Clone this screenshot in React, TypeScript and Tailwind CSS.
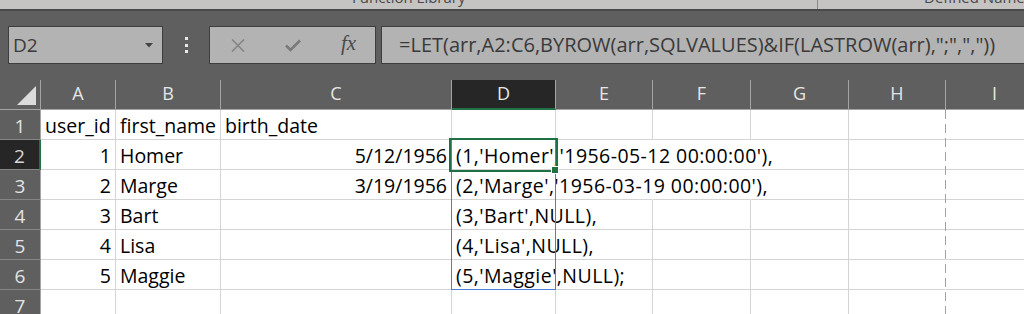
import React from "react";

const colWidths = ["w-[75px]", "w-[105px]", "w-[231px]", "w-[104px]", "w-[97px]", "w-[98px]", "w-[98px]", "w-[97px]", "w-[98px]"];
const letters = ["A", "B", "C", "D", "E", "F", "G", "H", "I"];

type Cell = { t?: string; right?: boolean; spill?: boolean };

const rows: Cell[][] = [
  [{ t: "user_id" }, { t: "first_name" }, { t: "birth_date" }, {}, {}, {}, {}, {}, {}],
  [{ t: "1", right: true }, { t: "Homer" }, { t: "5/12/1956", right: true }, { t: "(1,'Homer','1956-05-12 00:00:00'),", spill: true }, {}, {}, {}, {}, {}],
  [{ t: "2", right: true }, { t: "Marge" }, { t: "3/19/1956", right: true }, { t: "(2,'Marge','1956-03-19 00:00:00'),", spill: true }, {}, {}, {}, {}, {}],
  [{ t: "3", right: true }, { t: "Bart" }, {}, { t: "(3,'Bart',NULL),", spill: true }, {}, {}, {}, {}, {}],
  [{ t: "4", right: true }, { t: "Lisa" }, {}, { t: "(4,'Lisa',NULL),", spill: true }, {}, {}, {}, {}, {}],
  [{ t: "5", right: true }, { t: "Maggie" }, {}, { t: "(5,'Maggie',NULL);", spill: true }, {}, {}, {}, {}, {}],
  [{}, {}, {}, {}, {}, {}, {}, {}, {}],
];

function cellBorder(r: number, c: number): string {
  // hide vertical gridlines where long text overflows (rows 2 and 3 over E and F)
  if ((r === 1 || r === 2) && (c === 4 || c === 5)) return "border-r-white";
  if (c === 7) return "border-r-transparent";
  return "border-r-[#d4d4d4]";
}

export default function App() {
  return (
    <div className="w-[1024px] h-[314px] overflow-hidden bg-[#5f5f5f] font-['Open_Sans',sans-serif] select-none">
      {/* ribbon strip */}
      <div className="h-[9px] bg-[#c6c4c2] flex overflow-hidden">
        <div className="w-[817px] pl-[352px] shrink-0">
          <span className="block text-[15px] leading-none -mt-[10px] text-[#4a4a4a] whitespace-nowrap">Function Library</span>
        </div>
        <div className="w-px bg-[#8c8a88] shrink-0" />
        <div className="pl-[106px] shrink-0">
          <span className="block text-[15px] leading-none -mt-[10px] text-[#4a4a4a] whitespace-nowrap">Defined Names</span>
        </div>
      </div>
      <div className="h-[2px] bg-[#4a4a4a]" />

      {/* formula bar */}
      <div className="flex pt-[15px] h-[69px]">
        <div className="ml-[8px] w-[155px] h-[38px] bg-[#b3b3b3] border border-[#3e3e3e] flex items-center justify-between pl-[4px] pr-[9px] shrink-0">
          <span className="text-[19px] text-[#3a3a3a] leading-none">D2</span>
          <svg width="8" height="5" viewBox="0 0 8 5">
            <path d="M0 0H8L4 4.5Z" fill="#444" />
          </svg>
        </div>
        <div className="w-[46px] h-[38px] flex flex-col items-center justify-center gap-[3.5px] shrink-0 pl-[1px]">
          <div className="w-[3px] h-[3px] bg-[#e8e8e8]" />
          <div className="w-[3px] h-[3px] bg-[#e8e8e8]" />
          <div className="w-[3px] h-[3px] bg-[#e8e8e8]" />
        </div>
        <div className="w-[167px] h-[38px] bg-[#b3b3b3] border border-[#3e3e3e] flex items-center shrink-0">
          <svg className="ml-[21px]" width="14" height="13" viewBox="0 0 14 13">
            <path d="M1 0.5L13 12.5M13 0.5L1 12.5" stroke="#858585" strokeWidth="1.6" />
          </svg>
          <svg className="ml-[40px]" width="16" height="13" viewBox="0 0 16 13">
            <path d="M1 6.5L5.5 11L15 1.5" stroke="#7a7a7a" strokeWidth="2.6" fill="none" />
          </svg>
          <span className="ml-[40px] text-[21px] leading-none italic text-[#4a4a4a] font-['Liberation_Serif',serif] -mt-[3px]">fx</span>
        </div>
        <div className="ml-[5px] flex-1 h-[38px] bg-[#b3b3b3] border border-[#3e3e3e] border-r-0 flex items-center pl-[17px] overflow-hidden">
          <span className="text-[20px] text-[#3a3a3a] whitespace-nowrap leading-none">
            =LET(arr,A2:C6,BYROW(arr,SQLVALUES)&amp;IF(LASTROW(arr),";",","))
          </span>
        </div>
      </div>

      {/* grid */}
      <div className="relative w-[1044px]">
        {/* column headers */}
        <div className="flex h-[30px]">
          <div className="w-[41px] h-[30px] border-r border-r-[#a4a4a4] border-b border-b-[#a4a4a4] flex items-end justify-end pr-[4px] pb-[4px] shrink-0">
            <svg width="19" height="19" viewBox="0 0 19 19">
              <path d="M19 0V19H0Z" fill="#dcdcdc" />
            </svg>
          </div>
          {letters.map((l, i) => (
            <div
              key={l}
              className={`${colWidths[i]} h-[30px] shrink-0 flex items-center justify-center text-[18px] text-[#e6e6e6] border-r border-r-[#a4a4a4] ${
                i === 3 ? "bg-[#262626] border-b-2 border-b-[#217346]" : "border-b border-b-[#a4a4a4]"
              }`}
            >
              <span className="-mt-[2px]">{l}</span>
            </div>
          ))}
        </div>

        {/* rows */}
        {rows.map((row, r) => (
          <div key={r} className="flex h-[30px]">
            <div
              className={`w-[41px] h-[30px] shrink-0 flex items-end justify-center text-[19px] leading-[26px] border-b border-b-[#858585] ${
                r === 1 ? "bg-[#262626] text-[#d8d8d8] border-r-2 border-r-[#217346]" : "text-[#e4e4e4] border-r border-r-[#a4a4a4]"
              }`}
            >
              {r + 1}
            </div>
            {row.map((cell, c) => (
              <div
                key={c}
                className={`${colWidths[c]} h-[30px] shrink-0 bg-white border-b border-b-[#d4d4d4] border-r ${cellBorder(r, c)} flex items-end text-[19.5px] leading-[26px] text-black px-[4px] ${
                  cell.right ? "justify-end" : "justify-start"
                } ${cell.spill ? "overflow-visible" : "overflow-hidden"}`}
              >
                {cell.t && (
                  <span className={`whitespace-nowrap ${cell.spill ? "relative z-10 tracking-[0.45px]" : ""}`}>{cell.t}</span>
                )}
              </div>
            ))}
          </div>
        ))}

        {/* page break dashed line */}
        <div className="absolute left-[945px] top-[30px] w-px h-[220px] z-20 bg-[repeating-linear-gradient(to_bottom,#a2a2a2_0px,#a2a2a2_9px,transparent_9px,transparent_14px)]" />
        {/* selected range */}
        <div className="absolute left-[451px] top-[59px] w-[105px] h-[151px] border border-[#4a7ed8] z-20 pointer-events-none" />
        {/* active cell */}
        <div className="absolute left-[449px] top-[58px] w-[109px] h-[34px] border-2 border-[#1e7145] z-30 pointer-events-none" />
        {/* fill handle */}
        <div className="absolute left-[551px] top-[86px] w-[8px] h-[8px] bg-[#1e7145] border border-white z-40" />
      </div>
    </div>
  );
}
